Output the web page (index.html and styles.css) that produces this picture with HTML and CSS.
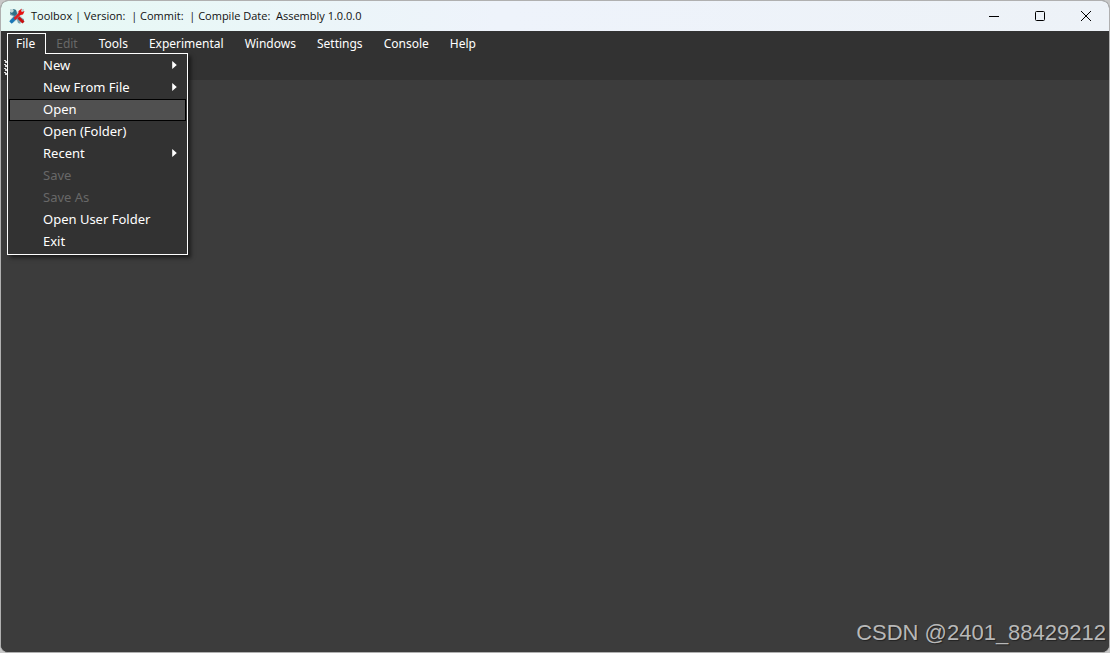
FILE: index.html
```html
<!DOCTYPE html>
<html lang="en">
<head>
<meta charset="utf-8">
<title>Toolbox</title>
<link rel="stylesheet" href="styles.css">
</head>
<body>
<div class="window">
  <header class="titlebar">
    <svg class="logo" viewBox="0 0 16 16" aria-hidden="true">
      <path d="M1 1h3l4 3 4-3h3v3l-3 4 3 4v3h-3l-4-3-4 3H1v-3l3-4-3-4z" fill="#9ab4bc" opacity=".5"/>
      <path d="M1 4l2 1 2-2-1-2 3 1 1 3 4 5 3 1v3l-2-1-2 2 1 1-3-1-1-3-4-4-3-1z" fill="#78a0b0"/>
      <path d="M1.500 14.500L6.500 9.500" stroke="#1878b8" stroke-width="3.500"/>
      <path d="M1 4l2 1 2-2-1-2 3 1 1 4-2 2-4-2z" fill="#307088"/>
      <path d="M5.500 11L11 5.500" stroke="#e02020" stroke-width="2.500"/>
      <path d="M9.500 6V3L13 .5 12 3l1 1 2.500-1-1.500 3.500-3 .5z" fill="#e81010"/>
      <path d="M9.500 9.500L14.500 14.500" stroke="#c81010" stroke-width="3"/>
    </svg>
    <h1 class="title">Toolbox | Version: &nbsp;| Commit: &nbsp;| Compile Date: &nbsp;Assembly 1.0.0.0</h1>
    <div class="controls">
      <button class="control" aria-label="Minimize"><svg viewBox="0 0 10 10"><path d="M0 5.500h10"/></svg></button>
      <button class="control" aria-label="Maximize"><svg viewBox="0 0 10 10"><rect x=".5" y=".5" width="9" height="9" rx="1"/></svg></button>
      <button class="control" aria-label="Close"><svg viewBox="0 0 10 10"><path d="M0 0l10 10M10 0L0 10"/></svg></button>
    </div>
  </header>
  <nav class="menubar">
    <div class="menu-root">
      <button class="menu-title open" aria-expanded="true">File</button>
      <div class="dropdown">
        <button class="item">New<svg class="arrow" viewBox="0 0 4 7"><path d="M0 0l4 3.500L0 7z"/></svg></button>
        <button class="item">New From File<svg class="arrow" viewBox="0 0 4 7"><path d="M0 0l4 3.500L0 7z"/></svg></button>
        <button class="item selected">Open</button>
        <button class="item">Open (Folder)</button>
        <button class="item">Recent<svg class="arrow" viewBox="0 0 4 7"><path d="M0 0l4 3.500L0 7z"/></svg></button>
        <button class="item" disabled>Save</button>
        <button class="item" disabled>Save As</button>
        <button class="item">Open User Folder</button>
        <button class="item">Exit</button>
      </div>
    </div>
    <button class="menu-title" disabled>Edit</button>
    <button class="menu-title">Tools</button>
    <button class="menu-title">Experimental</button>
    <button class="menu-title">Windows</button>
    <button class="menu-title">Settings</button>
    <button class="menu-title">Console</button>
    <button class="menu-title">Help</button>
  </nav>
  <div class="toolstrip"><svg class="grip" viewBox="0 0 3 15" aria-hidden="true"><path d="M0 0h2v1H0zM1 1h2v2H1zM0 4h2v1H0zM1 5h2v2H1zM0 8h2v1H0zM1 9h2v2H1zM0 12h2v1H0zM1 13h2v2H1z"/></svg></div>
  <main class="workspace"><p class="watermark">CSDN @2401_88429212</p></main>
</div>
</body>
</html>
```
FILE: styles.css
```css
* { box-sizing: border-box; }
body { margin: 0; background: #c8c8c8; font: 13px/18px "Noto Sans", sans-serif; }
button { font: inherit; color: inherit; background: none; border: 0; margin: 0; padding: 0; }
.window { height: 100vh; display: flex; flex-direction: column; border: 1px solid #b0b0b0; border-radius: 8px; overflow: hidden; background: #3c3c3c; }
.titlebar { flex: none; height: 30px; display: flex; align-items: center; padding-left: 8px; background: linear-gradient(90deg, #e6f9f4, #eef3fb 45%, #edf2f7); color: #111; }
.logo { width: 16px; height: 16px; margin-right: 6px; }
.title { margin: 0; font: 11px/20px "Open Sans", sans-serif; }
.controls { margin-left: auto; height: 100%; display: flex; }
.control { width: 46px; display: grid; place-items: center; }
.control svg { width: 10px; height: 10px; fill: none; stroke: #000; overflow: visible; }
.menubar { flex: none; display: flex; gap: 1px; height: 23px; padding: 2px 0 0 6px; background: #323232; color: #fff; }
.menu-root { position: relative; margin-right: -1px; }
.menu-title { height: 21px; padding: 0 10px; font-size: 12px; white-space: nowrap; }
.menu-title.open { position: relative; z-index: 2; border: 1px solid #fff; border-bottom: 0; background: #323232; padding: 0 10px 1px 8px; }
.menu-title:disabled, .item:disabled { color: #686868; }
.dropdown { position: absolute; z-index: 1; top: 20px; left: 0; width: 181px; padding: 1px; border: 1px solid #fff; background: #323232; box-shadow: 3px 3px 4px #0008; }
.item { display: flex; align-items: center; justify-content: space-between; width: 100%; height: 22px; padding: 0 8px 2px 33px; border: 1px solid transparent; text-align: left; }
.item.selected { border-color: #000; background: #505050; }
.arrow { width: 5px; height: 8px; fill: #fff; }
.toolstrip { flex: none; height: 26px; padding: 6px 0 0 3px; background: #323232; }
.grip { display: block; width: 3px; height: 15px; fill: #ddd; }
.workspace { flex: 1; display: flex; align-items: flex-end; justify-content: flex-end; background: #3c3c3c; }
.watermark { margin: 0 3px 4px; font: 22px/30px "Liberation Sans", sans-serif; color: #b8b8b8; text-shadow: 1px 1px 1px #222; }
```
